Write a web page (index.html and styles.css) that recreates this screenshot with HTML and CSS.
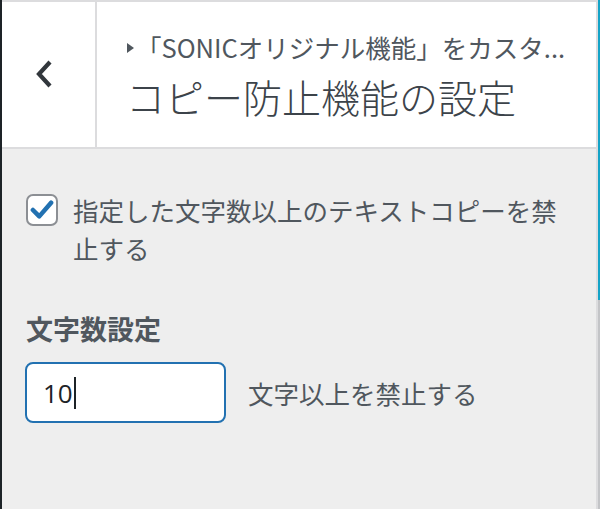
FILE: index.html
```html
<!DOCTYPE html>
<html lang="ja">
<head>
<meta charset="utf-8">
<link rel="stylesheet" href="styles.css">
</head>
<body>
<div class="frame">
  <div class="left-strip"></div>
  <div class="panel">
    <div class="header">
      <button class="back" aria-label="戻る">
        <svg width="20" height="30" viewBox="0 0 20 30"><path d="M15 3 L4 15 L15 27" fill="none" stroke="#32373c" stroke-width="4.2" stroke-linejoin="miter"/></svg>
      </button>
      <div class="titles">
        <div class="crumb"><span class="tri"></span>「SONICオリジナル機能」をカスタ...</div>
        <h1 class="title">コピー防止機能の設定</h1>
      </div>
    </div>
    <div class="content">
      <label class="check-row">
        <span class="checkbox">
          <svg width="24" height="20" viewBox="0 0 26 22"><path d="M3 11 L10 18 L23 3" fill="none" stroke="#2271b1" stroke-width="5" stroke-linecap="round" stroke-linejoin="round"/></svg>
        </span>
        <span class="check-text">指定した文字数以上のテキストコピーを禁止する</span>
      </label>
      <div class="field-label">文字数設定</div>
      <div class="field-row">
        <div class="input"><span class="val">10</span><span class="caret"></span></div>
        <span class="suffix">文字以上を禁止する</span>
      </div>
    </div>
  </div>
  <div class="right-border"></div>
  <div class="right-strip"><div class="blue"></div></div>
</div>
</body>
</html>
```

FILE: styles.css
```css
* { box-sizing: border-box; }
html, body { margin: 0; padding: 0; }
body {
  width: 600px;
  height: 509px;
  overflow: hidden;
  font-family: "Noto Sans CJK JP", "Noto Sans", sans-serif;
  background: #eeeeee;
}
.frame {
  display: flex;
  height: 509px;
}
.left-strip {
  width: 2px;
  background: #1d2327;
}
.panel {
  flex: 1;
  display: flex;
  flex-direction: column;
  background: #eeeeee;
  border-top: 2px solid #dcdcde;
}
.header {
  display: flex;
  height: 147px;
  background: #ffffff;
  border-bottom: 2px solid #dcdcde;
}
.back {
  width: 95px;
  border: 0;
  border-right: 2px solid #dcdcde;
  background: #fff;
  display: flex;
  align-items: center;
  justify-content: center;
  padding: 0;
  margin: 0;
}
.back svg { margin-left: -8px; margin-top: -2px; }
.titles {
  flex: 1;
  padding: 28px 0 0 29px;
  overflow: hidden;
}
.crumb {
  font-size: 25.5px;
  line-height: 34px;
  color: #50575e;
  white-space: nowrap;
  display: flex;
  align-items: center;
}
.tri {
  width: 0;
  height: 0;
  border-top: 5px solid transparent;
  border-bottom: 5px solid transparent;
  border-left: 7px solid #50575e;
  margin-right: 2px;
  margin-top: 2px;
  margin-left: 1px;
}
.title {
  margin: 8px 0 0 0;
  font-size: 39px;
  line-height: 48px;
  font-weight: 300;
  color: #3c434a;
  white-space: nowrap;
}
.content {
  padding: 44px 24px 0 24px;
}
.check-row {
  display: flex;
  align-items: flex-start;
}
.checkbox {
  flex: none;
  width: 32px;
  height: 32px;
  margin: 1px 15px 0 0;
  border: 2px solid #8c8f94;
  border-radius: 7px;
  background: #fff;
  display: flex;
  align-items: center;
  justify-content: center;
}
.check-text {
  font-size: 25.5px;
  line-height: 38px;
  color: #50575e;
  margin-top: -2px;
}
.field-label {
  margin-top: 44px;
  font-size: 27px;
  line-height: 36px;
  font-weight: 700;
  color: #50575e;
}
.field-row {
  display: flex;
  align-items: center;
  margin-top: 15px;
}
.input {
  width: 201px;
  height: 61px;
  margin-left: -1px;
  border: 2.5px solid #2271b1;
  border-radius: 8px;
  background: #fff;
  display: flex;
  align-items: center;
  padding-left: 16px;
}
.val {
  font-size: 26px;
  color: #1d2327;
  font-family: "Open Sans", "Noto Sans", sans-serif;
}
.caret {
  width: 2px;
  height: 32px;
  background: #1d2327;
  margin-left: 1px;
}
.suffix {
  margin-left: 22px;
  font-size: 25.5px;
  line-height: 36px;
  color: #50575e;
}
.right-border {
  width: 2px;
  background: #dcdcde;
}
.right-strip {
  width: 2px;
  background: #c3c4c7;
}
.blue {
  height: 300px;
  background: #14a3c7;
}
```
